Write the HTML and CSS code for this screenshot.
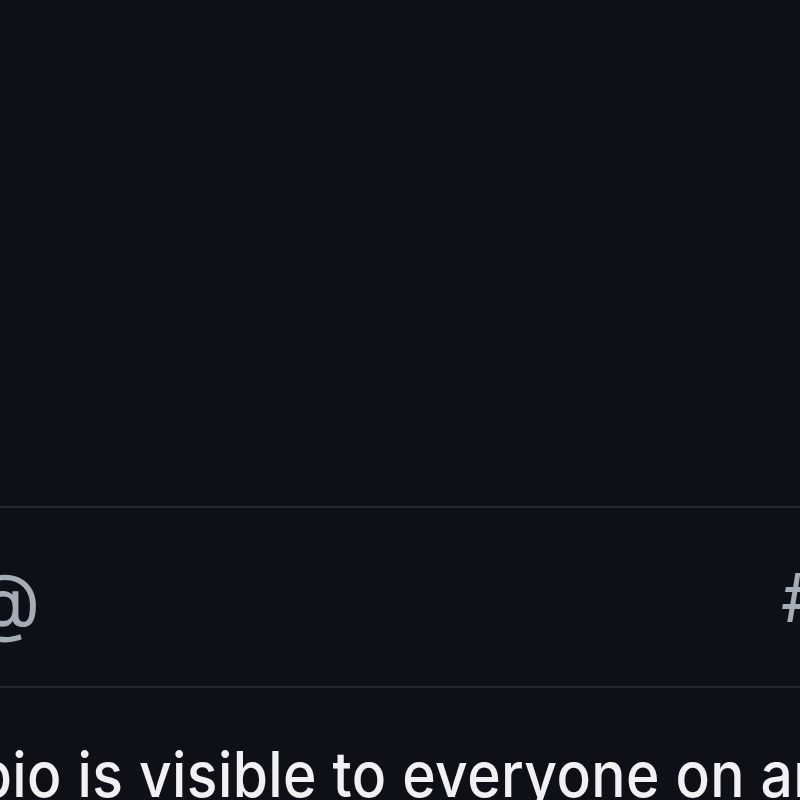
FILE: index.html
```html
<!DOCTYPE html>
<html>
<head>
<meta charset="utf-8">
<link rel="stylesheet" href="styles.css">
</head>
<body>
<div class="page">
  <div class="top"></div>
  <div class="row">
    <span class="at">@</span>
    <span class="hash">#</span>
  </div>
  <p class="note">Your bio is visible to everyone on any device</p>
</div>
</body>
</html>
```
FILE: styles.css
```css
html, body {
  margin: 0;
  padding: 0;
  background: #0d1117;
  height: 800px;
  overflow: hidden;
}
.page {
  width: 830px;
  margin-left: -14px;
  font-family: Inter, "Noto Sans", sans-serif;
}
.top {
  height: 506px;
}
.row {
  height: 178px;
  border-top: 2px solid #24282e;
  border-bottom: 2px solid #24282e;
  display: flex;
  justify-content: space-between;
  align-items: center;
}
.at, .hash {
  line-height: 1;
  color: #a4acb5;
}
.at {
  font-size: 76px;
  margin-left: -19px;
  margin-top: 6px;
}
.hash {
  font-size: 68px;
  margin-right: -8px;
}
.note {
  margin: 55px 0 0 -152px;
  font-size: 57px;
  font-weight: 500;
  letter-spacing: 0.4px;
  line-height: 1.2;
  color: #eff1f3;
  white-space: nowrap;
  transform: scaleY(1.1);
  transform-origin: 0 80%;
}
```
